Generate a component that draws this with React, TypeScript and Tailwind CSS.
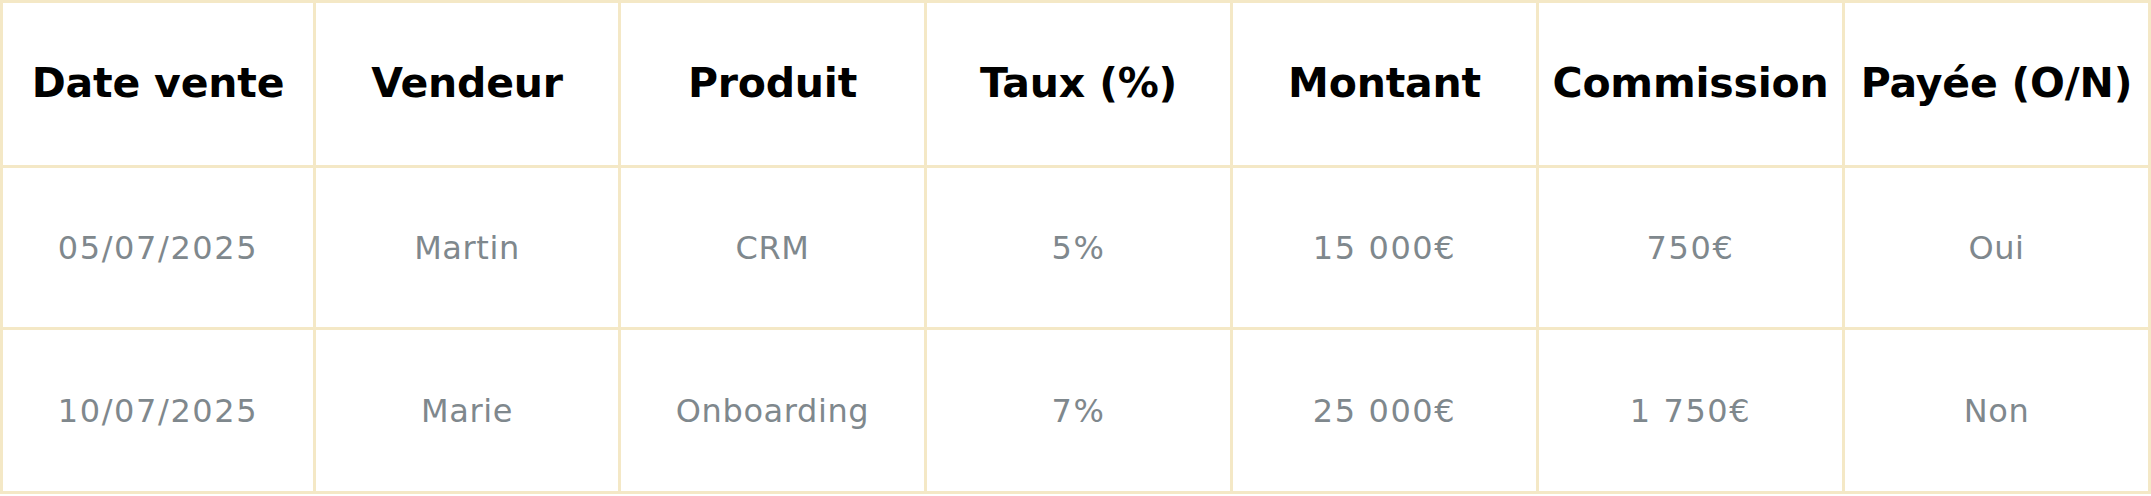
const headers = ['Date vente', 'Vendeur', 'Produit', 'Taux (%)', 'Montant', 'Commission', 'Payée (O/N)'];

const rows = [
  ['05/07/2025', 'Martin', 'CRM', '5%', '15 000€', '750€', 'Oui'],
  ['10/07/2025', 'Marie', 'Onboarding', '7%', '25 000€', '1 750€', 'Non'],
];

const isNumeric = (s: string) => /\d/.test(s);

export default function App() {
  return (
    <div className="w-[2151px] h-[496px] bg-white" style={{ fontFamily: '"DejaVu Sans", Inter, sans-serif' }}>
      <div className="grid grid-cols-[310px_302px_repeat(5,303px)] grid-rows-[162px_159px_161px] gap-[3px] p-[3px] bg-[#f4e8c6]">
        {headers.map((h) => (
          <div key={h} className="bg-white flex items-center justify-center text-[41px] font-bold text-black tracking-[-0.2px]">
            {h}
          </div>
        ))}
        {rows.map((row, i) =>
          row.map((cell, j) => (
            <div
              key={`${i}-${j}`}
              className={
                isNumeric(cell)
                  ? 'bg-white flex items-center justify-center text-[32px] text-[#7f888d] tracking-[1.6px]'
                  : 'bg-white flex items-center justify-center text-[32px] text-[#7f888d] tracking-[0.6px]'
              }
            >
              {cell}
            </div>
          ))
        )}
      </div>
    </div>
  );
}
